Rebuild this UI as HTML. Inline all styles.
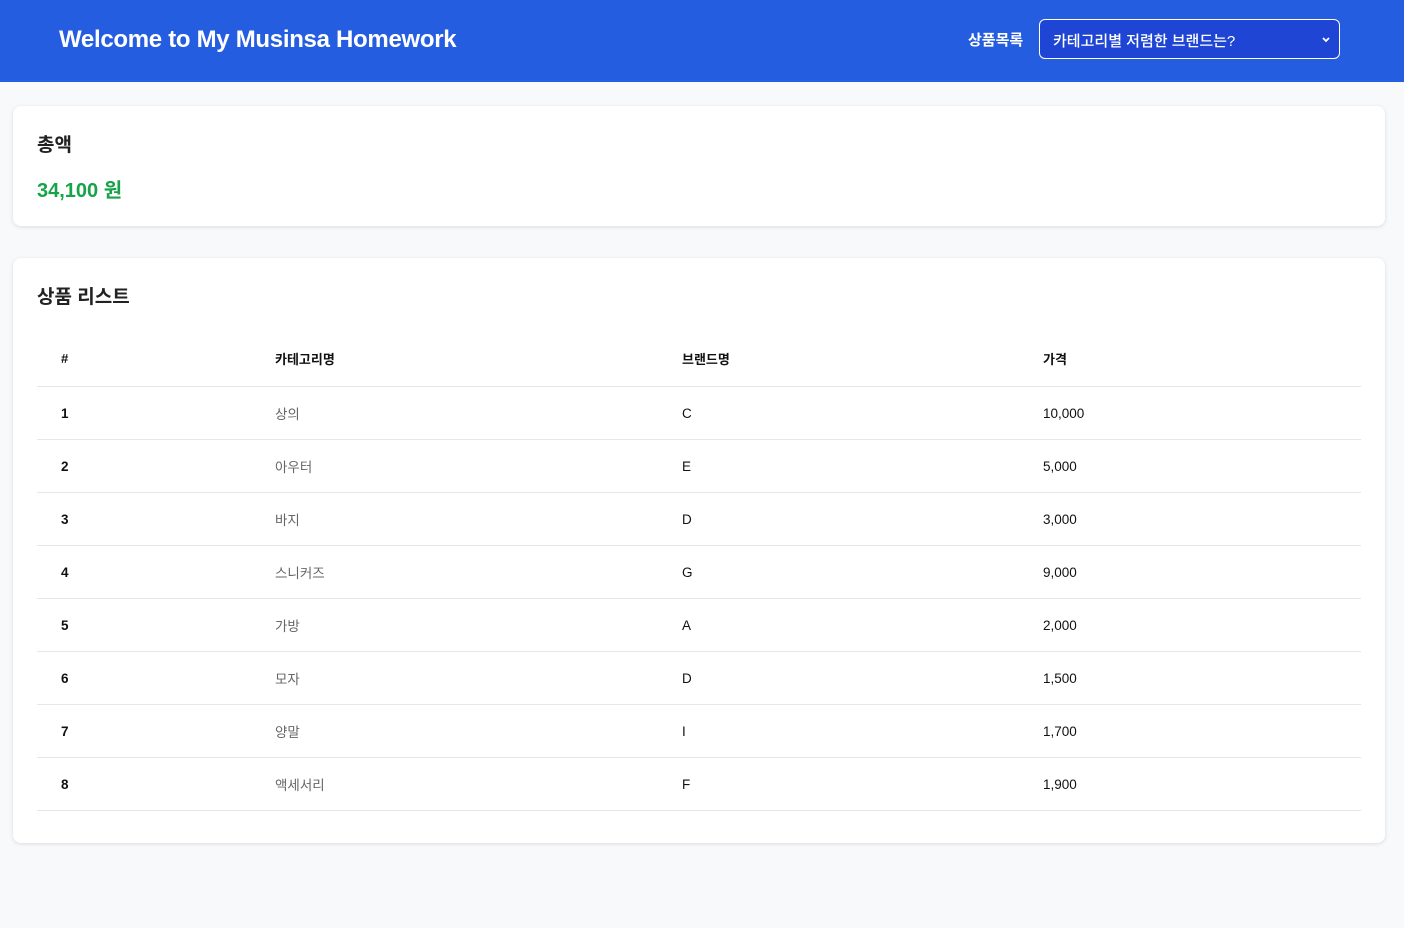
<!DOCTYPE html><html><head><meta charset="utf-8"><style>
body{margin:0;background:#f8f9fb;font-family:"Liberation Sans","Noto Sans CJK KR",sans-serif;width:1404px;height:928px;overflow:hidden}
.hd{height:82px;background:#255de1;position:relative;color:#fff}
.hd h1{position:absolute;left:59px;top:26px;margin:0;font-size:24px;font-weight:700;letter-spacing:-0.3px}
.lab{position:absolute;left:968px;top:29px;font-size:15px;font-weight:600}
.sel{position:absolute;left:1039px;top:19px;width:301px;height:40px;border:1px solid #fff;border-radius:6px;background:#1f45d4;box-sizing:border-box;font-size:15px;padding:10px 0 0 13px;font-weight:500}
.sel svg{position:absolute;right:8px;top:16px}
.card{position:absolute;left:13px;width:1372px;background:#fff;border-radius:8px;box-shadow:0 1px 4px rgba(0,0,0,.12)}
.t{position:absolute;left:24px;font-size:19px;font-weight:700;color:#222}
table{position:absolute;left:24px;top:72px;width:1324px;border-collapse:collapse;font-size:13.5px;color:#111}
td,th{text-align:left;padding:0;height:52px;border-bottom:1px solid #e5e7eb}
th{height:56px;font-weight:700;font-size:13px}
td:first-child,th:first-child{padding-left:24px;width:214px}
td:nth-child(2){color:#666}
td:first-child{font-weight:600}
</style></head><body>
<div class="hd"><h1>Welcome to My Musinsa Homework</h1><div class="lab">상품목록</div>
<div class="sel">카테고리별 저렴한 브랜드는?<svg width="10" height="8" viewBox="0 0 10 8"><path d="M2 2l3 3 3-3" stroke="#fff" stroke-width="1.8" fill="none"/></svg></div></div>
<div class="card" style="top:106px;height:120px"><div class="t" style="top:24px">총액</div><div style="position:absolute;left:24px;top:68px;font-size:20px;font-weight:700;color:#16a34a">34,100 원</div></div>
<div class="card" style="top:258px;height:585px"><div class="t" style="top:24px">상품 리스트</div>
<table><tr><th>#</th><th style="width:407px">카테고리명</th><th style="width:361px">브랜드명</th><th>가격</th></tr>
<tr><td>1</td><td>상의</td><td>C</td><td>10,000</td></tr>
<tr><td>2</td><td>아우터</td><td>E</td><td>5,000</td></tr>
<tr><td>3</td><td>바지</td><td>D</td><td>3,000</td></tr>
<tr><td>4</td><td>스니커즈</td><td>G</td><td>9,000</td></tr>
<tr><td>5</td><td>가방</td><td>A</td><td>2,000</td></tr>
<tr><td>6</td><td>모자</td><td>D</td><td>1,500</td></tr>
<tr><td>7</td><td>양말</td><td>I</td><td>1,700</td></tr>
<tr><td>8</td><td>액세서리</td><td>F</td><td>1,900</td></tr>
</table></div>
</body></html>
